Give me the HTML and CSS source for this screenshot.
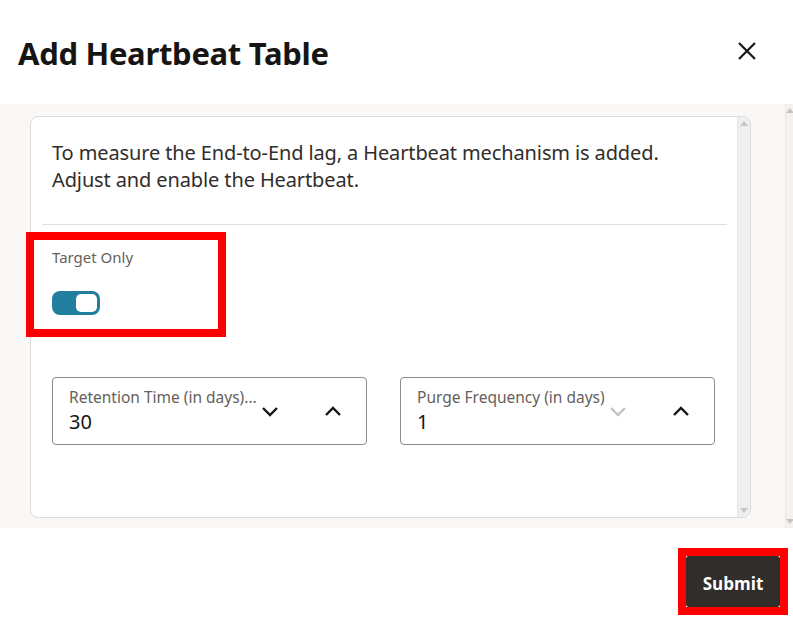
FILE: index.html
```html
<!DOCTYPE html>
<html>
<head>
<meta charset="utf-8">
<link rel="stylesheet" href="styles.css">
</head>
<body>
<div class="dialog">
  <header class="header">
    <h1 class="title">Add Heartbeat Table</h1>
    <button class="close" aria-label="Close">
      <svg width="20" height="20" viewBox="0 0 20 20"><path d="M2 2 L18 18 M18 2 L2 18" stroke="#161513" stroke-width="2.2" fill="none"/></svg>
    </button>
  </header>
  <main class="body">
    <section class="card">
      <div class="card-content">
        <p class="intro">To measure the End-to-End lag, a Heartbeat mechanism is added. Adjust and enable the Heartbeat.</p>
        <hr class="divider">
        <div class="switch-field">
          <div class="label">Target Only</div>
          <div class="switch"><span class="knob"></span></div>
        </div>
        <div class="fields">
          <div class="number-field">
            <div class="nf-text">
              <div class="nf-label">Retention Time (in days)...</div>
              <div class="nf-value">30</div>
            </div>
            <svg class="chev" width="20" height="12" viewBox="0 0 20 12"><path d="M3 2 L10 9 L17 2" stroke="#161513" stroke-width="2.4" fill="none"/></svg>
            <svg class="chev up" width="20" height="12" viewBox="0 0 20 12"><path d="M3 10 L10 3 L17 10" stroke="#161513" stroke-width="2.4" fill="none"/></svg>
          </div>
          <div class="number-field">
            <div class="nf-text">
              <div class="nf-label">Purge Frequency (in days)</div>
              <div class="nf-value">1</div>
            </div>
            <svg class="chev" width="20" height="12" viewBox="0 0 20 12"><path d="M3 2 L10 9 L17 2" stroke="#c4c2c0" stroke-width="2.4" fill="none"/></svg>
            <svg class="chev up" width="20" height="12" viewBox="0 0 20 12"><path d="M3 10 L10 3 L17 10" stroke="#161513" stroke-width="2.4" fill="none"/></svg>
          </div>
        </div>
      </div>
      <div class="scrollbar inner">
        <span class="arrow-up"></span>
        <span class="arrow-down"></span>
      </div>
    </section>
    <div class="scrollbar outer">
      <span class="arrow-up"></span>
      <span class="arrow-down"></span>
    </div>
  </main>
  <footer class="footer">
    <button class="submit">Submit</button>
  </footer>
  <div class="annot annot-switch"></div>
  <div class="annot annot-submit"></div>
</div>
</body>
</html>
```

FILE: styles.css
```css
* { box-sizing: border-box; }
html, body { margin: 0; padding: 0; background: #fff; }
body {
  width: 793px;
  height: 631px;
  overflow: hidden;
  font-family: "Noto Sans", "Open Sans", sans-serif;
  color: #161513;
}
.dialog {
  position: relative;
  width: 793px;
  height: 631px;
  display: flex;
  flex-direction: column;
}
.header {
  height: 104px;
  display: flex;
  align-items: center;
  justify-content: space-between;
  padding: 0 36px 0 18px;
}
.title {
  margin: 0;
  font-family: "Noto Sans", "Open Sans", sans-serif;
  font-weight: 700;
  font-size: 31px;
  letter-spacing: -0.3px;
  color: #161513;
  line-height: 1;
  margin-top: 3px;
}
.close {
  border: 0;
  background: none;
  padding: 0;
  width: 20px;
  height: 20px;
  margin-top: -2px;
  display: flex;
}
.body {
  height: 424px;
  background: #f9f8f6;
  display: flex;
  padding: 12px 0 10px 30px;
}
.card {
  width: 721px;
  height: 402px;
  background: #fff;
  border: 1px solid #dedcda;
  border-radius: 8px;
  display: flex;
  overflow: hidden;
}
.card-content {
  flex: 1;
  padding: 22px 10px 0 10px;
}
.intro {
  margin: 0 0 0 11px;
  font-size: 20px;
  letter-spacing: -0.12px;
  line-height: 27px;
  color: #312d2a;
  width: 640px;
}
.divider {
  border: 0;
  border-top: 1px solid #dfdedc;
  margin: 31px 0 0 1px;
}
.switch-field {
  padding: 22px 0 0 11px;
}
.label {
  font-size: 15px;
  line-height: 20px;
  color: #665f5b;
}
.switch {
  margin-top: 24px;
  width: 48px;
  height: 24px;
  border-radius: 8px;
  background: #227e9e;
  display: flex;
  align-items: center;
  justify-content: flex-end;
  padding-right: 3px;
}
.knob {
  width: 21px;
  height: 18px;
  border-radius: 5px;
  background: #fff;
}
.fields {
  display: flex;
  gap: 33px;
  margin: 62px 0 0 11px;
}
.number-field {
  width: 315px;
  height: 68px;
  border: 1px solid #8f8b88;
  border-radius: 4px;
  display: flex;
  align-items: center;
  padding: 0 24px 0 16px;
}
.nf-text {
  width: 191px;
  flex: none;
}
.nf-label {
  font-size: 15.5px;
  line-height: 21px;
  color: #665f5b;
  white-space: nowrap;
}
.nf-value {
  font-size: 20px;
  line-height: 27px;
  color: #161513;
}
.chev { flex: none; margin-top: 2px; }
.chev.up { margin-left: 43px; margin-top: 0; }
.scrollbar {
  flex: none;
  background: #f0efee;
  display: flex;
  flex-direction: column;
  justify-content: space-between;
  align-items: center;
  padding: 4px 0;
}
.scrollbar.inner { width: 13px; border-left: 1px solid #e6e5e3; }
.scrollbar.outer {
  width: 8px;
  margin-left: 34px;
  margin-top: -12px;
  margin-bottom: -10px;
  background: #f3f2f0;
  border-left: 1px solid #e9e8e6;
}
.arrow-up, .arrow-down {
  width: 0; height: 0;
  border-left: 4px solid transparent;
  border-right: 4px solid transparent;
}
.arrow-up { border-bottom: 5px solid #c8c6c4; }
.arrow-down { border-top: 5px solid #c8c6c4; }
.footer {
  flex: 1;
  display: flex;
  justify-content: flex-end;
  align-items: flex-start;
  padding: 28px 13px 0 0;
}
.submit {
  width: 94px;
  height: 51px;
  border: 0;
  border-radius: 3px;
  background: #312d2a;
  color: #fff;
  font-family: "Open Sans", "Noto Sans", sans-serif;
  font-weight: 700;
  font-size: 17px;
  padding-top: 4px;
}
.annot {
  position: absolute;
  border: 8px solid #ff0000;
}
.annot-switch { left: 26px; top: 232px; width: 200px; height: 105px; }
.annot-submit { left: 678px; top: 548px; width: 110px; height: 67px; }
```
